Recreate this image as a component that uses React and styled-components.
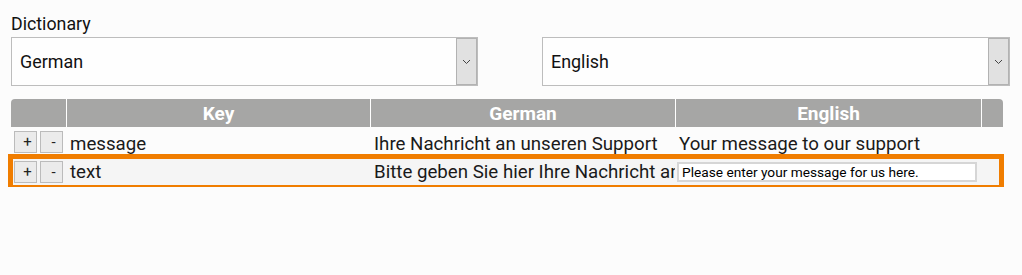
import React from "react";
import styled, { createGlobalStyle } from "styled-components";

const GlobalStyle = createGlobalStyle`
  body {
    margin: 0;
    background: #fcfcfc;
    font-family: Roboto, "Liberation Sans", sans-serif;
    color: #111;
  }
`;

const rows = [
  {
    key: "message",
    german: "Ihre Nachricht an unseren Support",
    english: "Your message to our support",
  },
  {
    key: "text",
    german: "Bitte geben Sie hier Ihre Nachricht an uns ein.",
    english: "Please enter your message for us here.",
    editing: true,
  },
];

const Chevron = () => (
  <svg width="9" height="6" viewBox="0 0 9 6">
    <path d="M1 1 L4.5 4.5 L8 1" fill="none" stroke="#444" strokeWidth="1" />
  </svg>
);

const Select = ({ value }) => (
  <SelectBox>
    <SelectValue>{value}</SelectValue>
    <SelectButton>
      <Chevron />
    </SelectButton>
  </SelectBox>
);

// put the caret at the end of the edited value
const focusEnd = (el) => {
  if (!el) return;
  el.focus();
  const n = el.value.length;
  el.setSelectionRange(n, n);
};

const App = () => (
  <Page>
    <GlobalStyle />
    <Label>Dictionary</Label>
    <Selects>
      <Select value="German" />
      <Select value="English" />
    </Selects>
    <Table>
      <HeaderRow>
        <HeadCell first />
        <HeadCell>Key</HeadCell>
        <HeadCell>German</HeadCell>
        <HeadCell>English</HeadCell>
        <HeadCell />
      </HeaderRow>
      {rows.map((row) => (
        <Row key={row.key} active={row.editing}>
          <Actions>
            <SmallButton>+</SmallButton>
            <SmallButton>-</SmallButton>
          </Actions>
          <Cell>{row.key}</Cell>
          <Cell>{row.german}</Cell>
          {row.editing ? (
            <Cell>
              <EditInput defaultValue={row.english} ref={focusEnd} />
            </Cell>
          ) : (
            <Cell>{row.english}</Cell>
          )}
          <Cell />
        </Row>
      ))}
    </Table>
  </Page>
);

const Page = styled.div`
  padding: 13px 12px 0 11px;
`;

const Label = styled.div`
  font-size: 17.8px;
  line-height: 21px;
  margin-bottom: 3px;
`;

const Selects = styled.div`
  display: grid;
  grid-template-columns: 467px 468px;
  column-gap: 64px;
`;

const SelectBox = styled.div`
  display: flex;
  height: 49px;
  box-sizing: border-box;
  border: 1px solid #bdbdbd;
  background: #fefefe;
`;

const SelectValue = styled.div`
  flex: 1;
  display: flex;
  align-items: center;
  padding-left: 8px;
  font-size: 17.9px;
`;

const SelectButton = styled.div`
  width: 21px;
  display: flex;
  align-items: center;
  justify-content: center;
  box-sizing: border-box;
  border: 1px solid #b2b2b2;
  background: #e1e1e1;
`;

const Table = styled.div`
  margin-top: 13px;
  width: 992px;
`;

const columns = "55px 304px 305px 306px 1fr";

const HeaderRow = styled.div`
  display: grid;
  grid-template-columns: ${columns};
  height: 28px;
  background: #a6a6a5;
  border-radius: 4px 4px 0 0;
`;

const HeadCell = styled.div`
  display: flex;
  align-items: center;
  justify-content: center;
  color: #fff;
  font-weight: 700;
  font-size: 19px;
  border-left: ${(p) => (p.first ? "none" : "1px solid #fff")};
`;

const Row = styled.div`
  --text-shift: ${(p) => (p.active ? "-1px" : "3px")};
  display: grid;
  grid-template-columns: ${columns};
  height: 30px;
  margin-right: 2px;
  align-items: center;
  background: ${(p) => (p.active ? "#f5f5f5" : "transparent")};
  outline: ${(p) => (p.active ? "5px solid #f07d00" : "none")};
  outline-offset: -2px;
`;

const Actions = styled.div`
  display: flex;
  gap: 3px;
  padding-left: 3px;
`;

const SmallButton = styled.div`
  width: 23px;
  height: 22px;
  box-sizing: border-box;
  border: 1px solid #bbb;
  background: #ebebeb;
  color: #222;
  font-size: 15px;
  padding-left: 4px;
  display: flex;
  align-items: center;
  justify-content: center;
`;

const Cell = styled.div`
  margin-top: var(--text-shift);
  padding-left: 4px;
  font-size: 18.7px;
  white-space: nowrap;
  overflow: hidden;
  color: #1a1a1a;
`;

const EditInput = styled.input`
  display: block;
  box-sizing: border-box;
  width: 300px;
  height: 20px;
  margin-left: -2px;
  border: 2px solid #d6d6d6;
  background: #fff;
  font-family: Roboto, "Liberation Sans", sans-serif;
  font-size: 13.7px;
  color: #000;
  padding: 0 3px;
  outline: none;
  caret-color: #000;
`;

export default App;
